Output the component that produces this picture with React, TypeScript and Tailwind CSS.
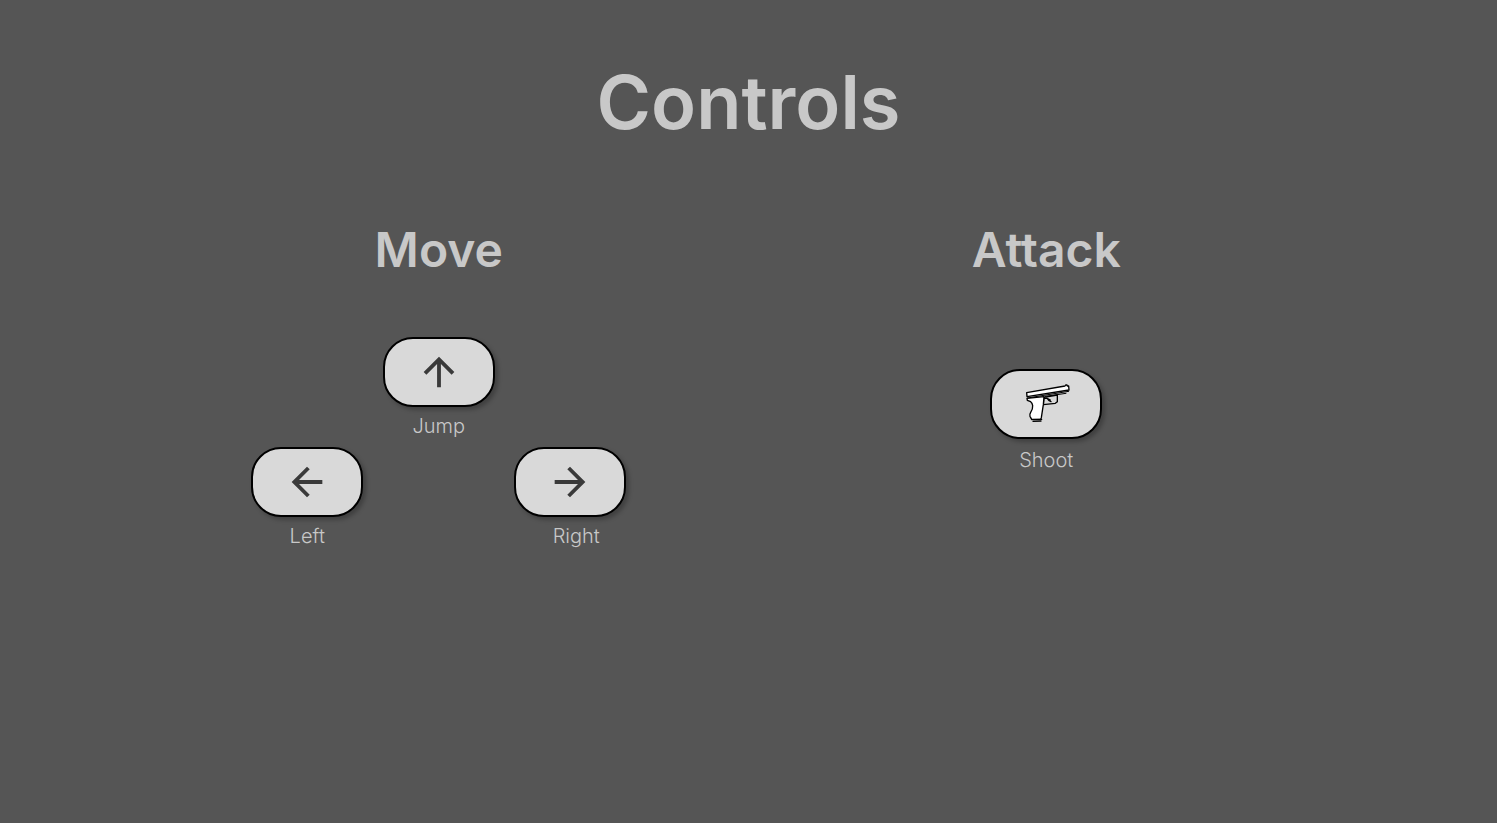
import type { ReactNode } from "react";

const arrows = {
  up: "M4 12l1.41 1.41L11 7.83V20h2V7.83l5.58 5.59L20 12l-8-8-8 8z",
  left: "M20 11H7.83l5.59-5.59L12 4l-8 8 8 8 1.41-1.41L7.83 13H20v-2z",
  right: "M12 4l-1.41 1.41L16.17 11H4v2h12.17l-5.58 5.59L12 20l8-8-8-8z",
};

function Arrow({ direction }: { direction: keyof typeof arrows }) {
  return (
    <svg viewBox="0 0 24 24" className="size-[46px] fill-[#3a3a3a]" aria-hidden="true">
      <path d={arrows[direction]} />
    </svg>
  );
}

function Pistol() {
  return (
    <svg viewBox="-3 3 186 162" className="h-[54px] w-[62px] shrink-0" aria-hidden="true">
      <g fill="#fff" stroke="#000" strokeWidth="4" strokeLinejoin="round" strokeLinecap="round">
        <path d="M84 64L124 57L124 77L118 82L82 86Z" fill="#d9d9d9" />
        <path d="M84 67L94 67Q98 75 105 77M92 66L103 72" fill="none" />
        <path d="M33 67L84 62L82 86L76 125L74 130L47 130L42 121Q40 115 44 109Q51 99 50 89Q49 81 44 77L34 73Z" />
        <path d="M32 50L147 30L149 27L153 27L154 30L158 30L159 42L33 62Z" />
        <path d="M34 66L158 46M88 61L150 52" fill="none" strokeWidth="3" />
        <path d="M48 131L77 130M51 136L75 135" fill="none" />
      </g>
    </svg>
  );
}

type KeyProps = { label: string; labelClass?: string; children: ReactNode };

function Key({ label, labelClass = "", children }: KeyProps) {
  return (
    <div className="flex w-28 flex-col items-center gap-[3px]">
      <button
        type="button"
        aria-label={label}
        className="flex h-[70px] w-28 items-center justify-center rounded-[30px] border-2 border-black bg-[#d9d9d9] shadow-[3px_3px_4px_rgba(0,0,0,0.25)]"
      >
        {children}
      </button>
      <span className={`text-xl leading-8 font-light ${labelClass}`}>{label}</span>
    </div>
  );
}

export default function App() {
  return (
    <main className="min-h-screen bg-[#555555] pt-14 font-['Inter',sans-serif] text-[#c8c8c8] [font-optical-sizing:none]">
      <h1 className="text-center text-[74px] leading-[92px] font-semibold">Controls</h1>
      <div className="mt-18 grid grid-cols-2 pr-[147px] pl-[135px]">
        <section className="flex flex-col items-center">
          <h2 className="text-5xl leading-[60px] font-semibold">Move</h2>
          <div className="mt-[57px] flex w-[375px] flex-col gap-[5px]">
            <div className="flex justify-center">
              <Key label="Jump">
                <Arrow direction="up" />
              </Key>
            </div>
            <div className="flex justify-between">
              <Key label="Left">
                <Arrow direction="left" />
              </Key>
              <Key label="Right" labelClass="pl-3">
                <Arrow direction="right" />
              </Key>
            </div>
          </div>
        </section>
        <section className="flex flex-col items-center">
          <h2 className="text-5xl leading-[60px] font-semibold">Attack</h2>
          <div className="mt-[89px]">
            <Key label="Shoot" labelClass="pt-0.5">
              <Pistol />
            </Key>
          </div>
        </section>
      </div>
    </main>
  );
}
